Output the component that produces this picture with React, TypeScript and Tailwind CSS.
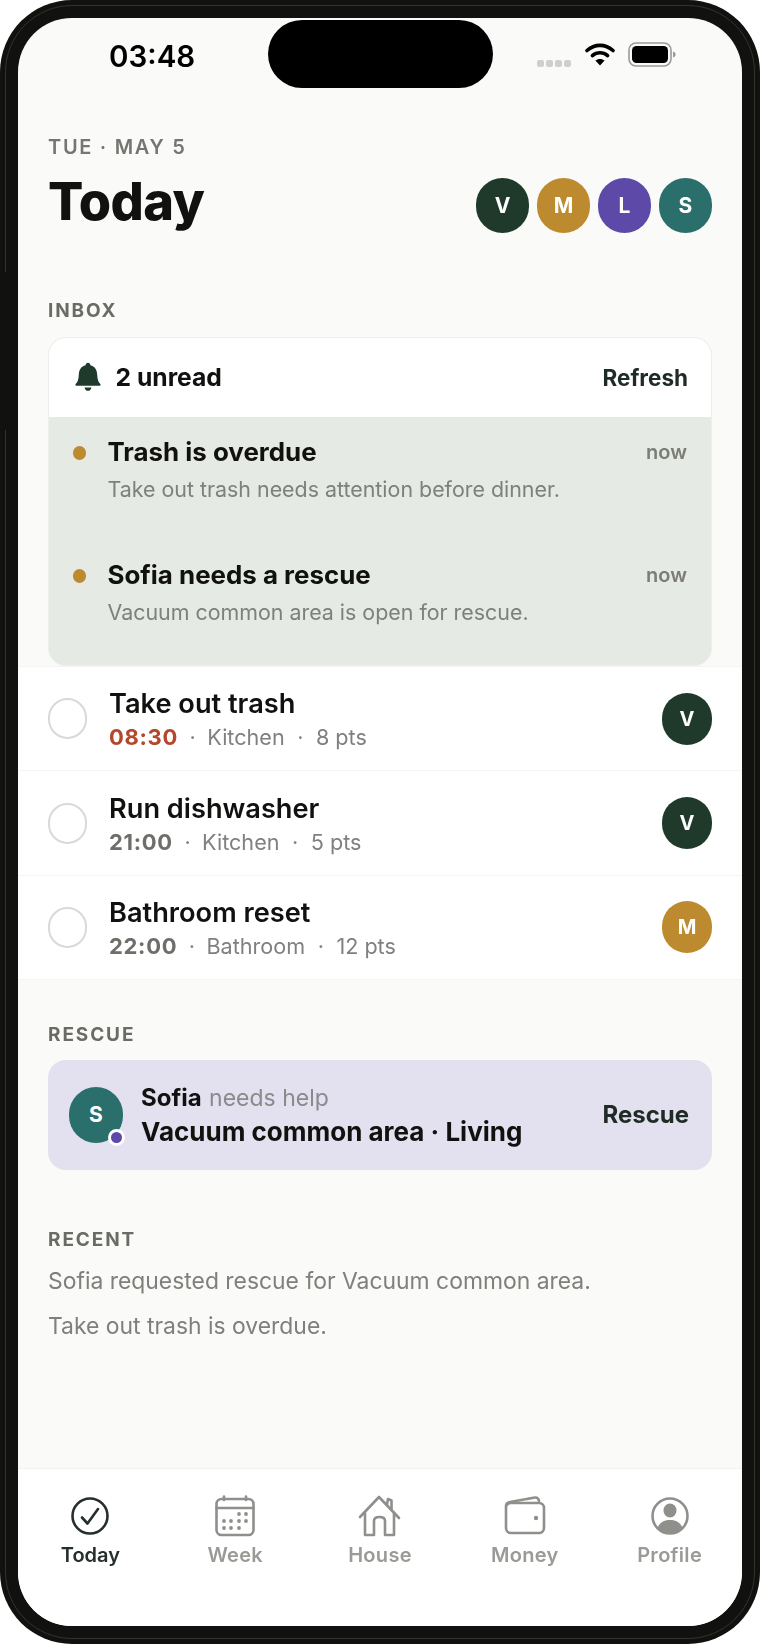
import React from "react";

const INK = "#111110";

function Avatar({ letter, bg, w = "w-[53px]", h = "h-[55px]", size = "text-[21px]" }: { letter: string; bg: string; w?: string; h?: string; size?: string }) {
  return (
    <div className={`${w} ${h} ${size} rounded-full flex items-center justify-center text-white font-bold shrink-0`} style={{ backgroundColor: bg }}>
      {letter}
    </div>
  );
}

function Label({ children }: { children: React.ReactNode }) {
  return <div className="text-[19px] leading-[24px] font-bold tracking-[1.9px] text-[#6a6a66]">{children}</div>;
}

function Wifi() {
  return (
    <svg width="30" height="25" viewBox="0 0 30 25" fill="none">
      <path d="M2 9.5C9.5 2.6 20.5 2.6 28 9.5" stroke="#000" strokeWidth="3.6" strokeLinecap="round" />
      <path d="M7.4 14.6C11.8 10.8 18.2 10.8 22.6 14.6" stroke="#000" strokeWidth="3.6" strokeLinecap="round" />
      <path d="M15 24.5L10.4 19.6C13 17.4 17 17.4 19.6 19.6Z" fill="#000" />
    </svg>
  );
}

function Battery() {
  return (
    <svg width="48" height="25" viewBox="0 0 48 25" fill="none">
      <rect x="1" y="1" width="42" height="23" rx="7" stroke="#9a9a98" strokeWidth="1.6" />
      <rect x="4" y="4" width="36" height="17" rx="4.5" fill="#000" />
      <path d="M45 9.5C46.8 10.2 47.6 11.2 47.6 12.5C47.6 13.8 46.8 14.8 45 15.5Z" fill="#9a9a98" />
    </svg>
  );
}

function Bell() {
  return (
    <svg width="26" height="30" viewBox="0 0 26 30" fill="#1f3a2b">
      <path d="M13 0.8c1.4 0 2.3 1 2.4 2.5 4.3 1 6.6 4.5 6.8 9.4 0.2 4.6 1 7.2 3.2 9.4 0.5 0.6 0.2 1.6-0.8 1.6H1.4c-1 0-1.3-1-0.8-1.6 2.2-2.2 3-4.8 3.2-9.4 0.2-4.9 2.5-8.4 6.8-9.4 0.1-1.5 1-2.5 2.4-2.5z" />
      <path d="M9.6 25.4h6.8c-0.2 2-1.6 3.4-3.4 3.4s-3.2-1.4-3.4-3.4z" />
    </svg>
  );
}

function InboxItem({ title, body, pb }: { title: string; body: string; pb: string }) {
  return (
    <div className={`flex pl-[25px] pr-[24px] pt-[19px] ${pb}`}>
      <div className="w-[13px] h-[14px] rounded-full bg-[#bd8a30] mt-[10px] mr-[21.5px] -ml-[1px] shrink-0" />
      <div className="flex-1 min-w-0">
        <div className="flex justify-between items-center">
          <span className="text-[25.9px] leading-[32px] font-bold text-[#111110]">{title}</span>
          <span className="text-[20px] leading-[32px] font-semibold text-[#7d7d78]">now</span>
        </div>
        <div className="text-[21.4px] leading-[28px] mt-[7px] text-[#7f7f7b]">{body}</div>
      </div>
    </div>
  );
}

function TaskRow({ title, time, timeClass, place, pts, avatar, bg }: { title: string; time: string; timeClass: string; place: string; pts: string; avatar: string; bg: string }) {
  return (
    <div className="h-[104.4px] bg-white border-b border-[#f4f4f0] flex items-center pl-[30px] pr-[30px]">
      <div className="w-[39px] h-[41px] rounded-full border-2 border-[#d9d9d5] shrink-0" />
      <div className="ml-[22px] flex-1 min-w-0 pt-[3px]">
        <div className="text-[27.2px] leading-[34px] font-semibold text-[#111110]">{title}</div>
        <div className="text-[21.6px] leading-[32px] text-[#808080] flex items-center">
          <span className={`font-bold tracking-[0.7px] text-[22px] ${timeClass}`}>{time}</span>
          <span className="px-[11.5px]">·</span>
          <span>{place}</span>
          <span className="px-[12.5px]">·</span>
          <span>{pts}</span>
        </div>
      </div>
      <Avatar letter={avatar} bg={bg} w="w-[50px]" h="h-[52px]" size="text-[20px]" />
    </div>
  );
}

function TabIcon({ children, active }: { children: React.ReactNode; active?: boolean }) {
  return (
    <svg width="44" height="42" viewBox="0 0 44 42" fill="none" stroke={active ? "#26302b" : "#8f8f8c"} strokeWidth="2.6" strokeLinecap="round" strokeLinejoin="round">
      {children}
    </svg>
  );
}

function Tab({ label, active, children }: { label: string; active?: boolean; children: React.ReactNode }) {
  return (
    <div className="flex-1 flex flex-col items-center">
      {children}
      <div className={`mt-[6px] text-[20px] leading-[24px] font-semibold ${active ? "text-[#26302b] tracking-[0px]" : "text-[#9a9a97] tracking-[0.3px]"}`}>{label}</div>
    </div>
  );
}

export default function App() {
  return (
    <div className="w-[760px] h-[1644px] bg-white" style={{ fontFamily: "Inter, 'Liberation Sans', sans-serif" }}>
      <div className="relative w-full h-full rounded-[72px] bg-[#11110f] p-[18px]">
        <div className="absolute inset-[5px] rounded-[67px] border border-[#33332e]" />
        <div className="absolute left-[3px] top-[272px] w-[5px] h-[158px] bg-[#11110f]" />
        <div className="relative w-full h-full rounded-[54px] bg-[#fafaf8] overflow-hidden flex flex-col blur-[0.4px]">
          <div className="relative h-[117px] shrink-0">
            <div className="absolute left-[91px] top-[20px] text-[29.5px] leading-[36px] font-semibold text-black">03:48</div>
            <div className="absolute left-[250px] top-[2px] w-[225px] h-[68px] rounded-[34px] bg-black" />
            <div className="absolute left-[519px] top-[42px] flex gap-[2px]">
              <span className="w-[7px] h-[7px] rounded-[2px] bg-[#cfcfcd]" />
              <span className="w-[7px] h-[7px] rounded-[2px] bg-[#cfcfcd]" />
              <span className="w-[7px] h-[7px] rounded-[2px] bg-[#cfcfcd]" />
              <span className="w-[7px] h-[7px] rounded-[2px] bg-[#cfcfcd]" />
            </div>
            <div className="absolute left-[567px] top-[23px]"><Wifi /></div>
            <div className="absolute left-[610px] top-[24px]"><Battery /></div>
          </div>

          <div className="px-[30px] flex justify-between items-end">
            <div>
              <div className="text-[20px] leading-[24px] font-semibold tracking-[1.7px] text-[#757571]">TUE · MAY 5</div>
              <div className="mt-[10px] text-[52.3px] leading-[64px] font-extrabold tracking-[-0.6px]" style={{ color: INK }}>Today</div>
            </div>
            <div className="flex gap-[8px]">
              <Avatar letter="V" bg="#1f3a2b" />
              <Avatar letter="M" bg="#bd8a30" />
              <Avatar letter="L" bg="#5d4aa8" />
              <Avatar letter="S" bg="#2a6f6c" />
            </div>
          </div>

          <div className="px-[30px] mt-[66px]">
            <Label>INBOX</Label>
            <div className="mt-[14px] rounded-[18px] overflow-hidden border border-[#eeeeea] bg-[#e5eae4]">
              <div className="h-[79px] bg-white flex items-center justify-between pl-[26px] pr-[23px]">
                <div className="flex items-center gap-[14.5px]">
                  <Bell />
                  <span className="text-[24.7px] font-bold text-[#111110]">2 unread</span>
                </div>
                <span className="text-[22.5px] font-bold text-[#1f2b25]">Refresh</span>
              </div>
              <InboxItem title="Trash is overdue" body="Take out trash needs attention before dinner." pb="pb-[37px]" />
              <InboxItem title="Sofia needs a rescue" body="Vacuum common area is open for rescue." pb="pb-[39px]" />
            </div>
          </div>

          <div className="border-t border-[#f4f4f0]">
            <TaskRow title="Take out trash" time="08:30" timeClass="text-[#b5472c]" place="Kitchen" pts="8 pts" avatar="V" bg="#1f3a2b" />
            <TaskRow title="Run dishwasher" time="21:00" timeClass="text-[#6e6e6a]" place="Kitchen" pts="5 pts" avatar="V" bg="#1f3a2b" />
            <TaskRow title="Bathroom reset" time="22:00" timeClass="text-[#6e6e6a]" place="Bathroom" pts="12 pts" avatar="M" bg="#bd8a30" />
          </div>

          <div className="px-[30px] mt-[42.6px]">
            <Label>RESCUE</Label>
            <div className="mt-[13px] h-[110px] rounded-[18px] bg-[#e3e0ef] flex items-center pl-[21px] pr-[23px]">
              <div className="relative shrink-0">
                <Avatar letter="S" bg="#2a6f6c" w="w-[54px]" h="h-[56px]" size="text-[21px]" />
                <div className="absolute right-[-2px] bottom-[-3px] w-[17px] h-[17px] rounded-full bg-[#5d4aa8] border-[3px] border-white" />
              </div>
              <div className="ml-[18px] flex-1 min-w-0">
                <div className="text-[23px] leading-[34px] text-[#8a8a8c] pt-[1px]"><span className="text-[24px] font-bold text-[#111110] mr-[1px]">Sofia</span> needs help</div>
                <div className="text-[26px] leading-[34px] font-bold text-[#111110]">Vacuum common area · Living</div>
              </div>
              <span className="text-[24px] font-bold text-[#1f2b25]">Rescue</span>
            </div>
          </div>

          <div className="px-[30px] mt-[58px]">
            <Label>RECENT</Label>
            <div className="mt-[14px] flex flex-col gap-[15px] text-[22.9px] leading-[30px] text-[#7f7f7b]">
              <div>Sofia requested rescue for Vacuum common area.</div>
              <div>Take out trash is overdue.</div>
            </div>
          </div>

          <div className="mt-auto h-[158px] bg-white border-t border-[#f2f2ee] pt-[26px] flex">
            <Tab label="Today" active>
              <TabIcon active>
                <circle cx="22" cy="21" r="17.5" />
                <path d="M14 22.5L19.5 28.5L30 14" />
              </TabIcon>
            </Tab>
            <Tab label="Week">
              <TabIcon>
                <rect x="3.5" y="4" width="37" height="36" rx="5" />
                <path d="M3.5 13H40.5" />
                <path d="M11 1.5V5M33 1.5V5" />
                <g fill="#8f8f8c" stroke="none">
                  <circle cx="26" cy="19" r="1.9" /><circle cx="33" cy="19" r="1.9" />
                  <circle cx="11" cy="26" r="1.9" /><circle cx="18" cy="26" r="1.9" /><circle cx="26" cy="26" r="1.9" /><circle cx="33" cy="26" r="1.9" />
                  <circle cx="11" cy="33" r="1.9" /><circle cx="18" cy="33" r="1.9" /><circle cx="26" cy="33" r="1.9" />
                </g>
              </TabIcon>
            </Tab>
            <Tab label="House">
              <TabIcon>
                <path d="M2 22L21 2L41 23" />
                <path d="M7 18V40H16V26C16 23 18 22 21.5 22C25 22 27 23 27 26V40H36V18" />
                <path d="M29 9.5L30 4L33.5 5.5V14" />
              </TabIcon>
            </Tab>
            <Tab label="Money">
              <TabIcon>
                <path d="M3 11C3 8.5 4.5 7.5 7 7L32 2.5C34.5 2.2 35.5 3.5 36 6" />
                <rect x="3" y="8" width="38" height="30" rx="5" />
                <circle cx="33" cy="23" r="2.2" fill="#8f8f8c" stroke="none" />
              </TabIcon>
            </Tab>
            <Tab label="Profile">
              <TabIcon>
                <circle cx="22" cy="21" r="17.5" />
                <ellipse cx="22" cy="15.5" rx="6.5" ry="7" fill="#8f8f8c" stroke="none" />
                <path d="M9.5 33C11.5 27.5 16 25 22 25C28 25 32.5 27.5 34.5 33C31 36.5 27 38.5 22 38.5C17 38.5 13 36.5 9.5 33Z" fill="#8f8f8c" stroke="none" />
              </TabIcon>
            </Tab>
          </div>
        </div>
      </div>
    </div>
  );
}
